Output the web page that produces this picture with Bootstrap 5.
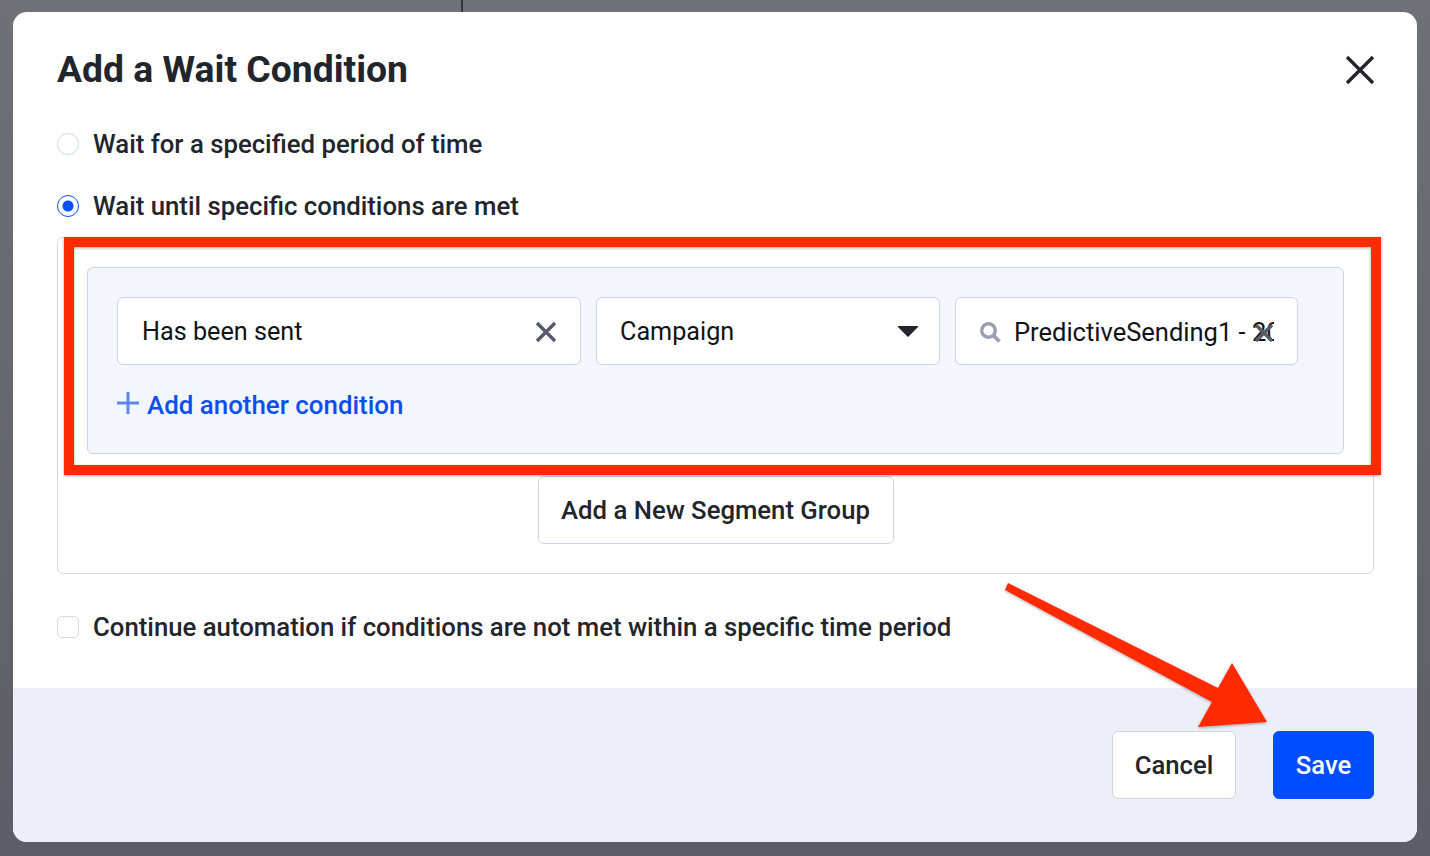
<!DOCTYPE html>
<html lang="en">
<head>
  <meta charset="UTF-8" />
  <meta name="viewport" content="width=device-width, initial-scale=1.0"/>
  <title>Add a Wait Condition</title>
  <link href="https://cdn.jsdelivr.net/npm/bootstrap@5.3.3/dist/css/bootstrap.min.css" rel="stylesheet" />
  <style>
    html, body { height: 100%; }
    body {
      background: linear-gradient(180deg, #6f7176, #5c5d66);
      font-family: "Roboto", "Liberation Sans", sans-serif;
      color: #22252c;
      padding: 12px 13px 14px;
      overflow: hidden;
      position: relative;
    }
    .back-line { position: absolute; left: 461px; top: 0; width: 2px; height: 12px; background: #34363c; }
    .wait-modal {
      height: 830px;
      border: 0;
      border-radius: 14px;
      overflow: hidden;
      position: relative;
    }
    .wait-head { padding: 35px 42px 0 44px; height: 121px; flex: none; }
    .wait-title { font-size: 37.3px; font-weight: 700; line-height: 44px; margin: 0; color: #22252c; }
    .close-x { margin-top: 8px; }
    .wait-body { padding: 0 43px 0 44px; height: 555px; flex: none; }
    .opt-row { height: 22px; font-size: 25.75px; font-weight: 500; line-height: 22px; gap: 14px; }
    .opt-row + .opt-row { margin-top: 40px; }
    .opt-row .form-check-input {
      width: 22px; height: 22px; margin: 0; flex: none;
      border: 1px solid #d5d8e2; box-shadow: none;
    }
    .opt-row .form-check-input[type=checkbox] { border-radius: 5px; }
    .opt-row .form-check-input:checked[type=radio] {
      background-color: #fff;
      border-color: #0a4ff0;
      background-image: radial-gradient(circle, #0a4ff0 0, #0a4ff0 5px, #fff 6px);
    }
    .group-box {
      margin-top: 20px;
      height: 337px;
      border: 1px solid #d5d8e2;
      border-radius: 6px;
      padding: 29px;
    }
    .seg-panel {
      height: 187px;
      background: #f3f6fd;
      border: 1px solid #d0d4e0;
      border-radius: 6px;
      padding: 29px;
    }
    .field-row { gap: 15px; height: 68px; }
    .cond-field {
      height: 68px;
      background: #fff;
      border: 1px solid #d0d4e0;
      border-radius: 6px;
      padding: 2px 23px 0 24px;
      font-size: 25.2px;
      color: #111318;
      line-height: 32px;
    }
    .f-type { width: 464px; }
    .f-kind { width: 344px; padding: 0 20px 0 23px; }
    .f-kind span { padding-top: 2px; }
    .f-pick { width: 343px; position: relative; }
    .pick-text { white-space: nowrap; overflow: hidden; width: 262px; margin-left: 13px; font-size: 25.5px; }
    .pick-x { position: absolute; right: 23px; top: 25px; }
    .add-link {
      margin-top: 25px; gap: 8px; font-size: 25.9px; font-weight: 500; line-height: 30px;
      color: #0a4ff0; text-decoration: none;
    }
    .add-plus { margin-bottom: 4px; }
    .seg-btn {
      display: block;
      margin: 22px auto 0;
      width: 356px; height: 68px;
    }
    .plain-btn {
      background: #fff;
      border: 1px solid #d0d4e0;
      border-radius: 6px;
      font-size: 25.7px;
      font-weight: 500;
      color: #22252c;
      padding: 0;
    }
    .continue-row { margin-top: 42px; }
    .wait-foot {
      background: #eceff7;
      height: 154px;
      border: 0;
      padding: 43px 43px 0 0;
      gap: 37px;
      align-items: flex-start;
      justify-content: flex-end;
      border-radius: 0;
    }
    .foot-cancel { width: 124px; height: 68px; }
    .foot-save {
      width: 101px; height: 68px;
      background: #004cff; border: 1px solid #004cff; border-radius: 6px;
      font-size: 25.7px; font-weight: 500; color: #fff; padding: 0;
    }
    .mark-up { position: absolute; left: 0; top: 0; pointer-events: none; }
  </style>
</head>
<body>
  <div class="back-line"></div>

  <div class="modal-content wait-modal d-flex flex-column bg-white">
    <div class="wait-head d-flex justify-content-between align-items-start">
      <h5 class="wait-title">Add a Wait Condition</h5>
      <svg class="close-x" width="30" height="30" viewBox="0 0 30 30"><path d="M2 2 L28 28 M28 2 L2 28" stroke="#22252c" stroke-width="3.4" fill="none"/></svg>
    </div>

    <div class="wait-body">
      <label class="opt-row d-flex align-items-center">
        <input class="form-check-input" type="radio" name="waitType">
        <span>Wait for a specified period of time</span>
      </label>
      <label class="opt-row d-flex align-items-center">
        <input class="form-check-input" type="radio" name="waitType" checked>
        <span>Wait until specific conditions are met</span>
      </label>

      <div class="group-box">
        <div class="seg-panel">
          <div class="field-row d-flex">
            <div class="cond-field f-type d-flex align-items-center justify-content-between">
              <span>Has been sent</span>
              <svg width="22" height="22" viewBox="0 0 22 22"><path d="M2 2 L20 20 M20 2 L2 20" stroke="#555a68" stroke-width="3.4" fill="none"/></svg>
            </div>
            <div class="cond-field f-kind d-flex align-items-center justify-content-between">
              <span>Campaign</span>
              <svg width="22" height="11" viewBox="0 0 22 11"><path d="M1 0 H21 Q22 0 21 1 L11.6 10.4 Q11 11 10.4 10.4 L1 1 Q0 0 1 0 Z" fill="#22252c"/></svg>
            </div>
            <div class="cond-field f-pick d-flex align-items-center">
              <svg width="21" height="21" viewBox="0 0 21 21" class="flex-shrink-0"><circle cx="8.5" cy="8.5" r="6.8" stroke="#9a9fb0" stroke-width="3.4" fill="none"/><path d="M13.5 13.5 L19.5 19.5" stroke="#9a9fb0" stroke-width="3.8" fill="none"/></svg>
              <div class="pick-text">PredictiveSending1 - 2020</div>
              <svg class="pick-x" width="20" height="20" viewBox="0 0 20 20"><path d="M2 2 L18 18 M18 2 L2 18" stroke="#555a68" stroke-width="3.4" fill="none"/></svg>
            </div>
          </div>
          <a href="#" class="add-link d-inline-flex align-items-center">
            <svg class="add-plus" width="22" height="22" viewBox="0 0 22 22"><path d="M11 0 V22 M0 11 H22" stroke="#5c85f5" stroke-width="3" fill="none"/></svg>
            <span>Add another condition</span>
          </a>
        </div>
        <button type="button" class="btn plain-btn seg-btn">Add a New Segment Group</button>
      </div>

      <label class="opt-row continue-row d-flex align-items-center">
        <input class="form-check-input" type="checkbox">
        <span>Continue automation if conditions are not met within a specific time period</span>
      </label>
    </div>

    <div class="modal-footer wait-foot d-flex">
      <button type="button" class="btn plain-btn foot-cancel m-0">Cancel</button>
      <button type="button" class="btn foot-save m-0">Save</button>
    </div>
  </div>

  <!-- annotation drawn on top of the screenshot -->
  <svg class="mark-up" width="1430" height="856" viewBox="0 0 1430 856">
    <defs>
      <filter id="markShadow" x="-5%" y="-5%" width="110%" height="110%">
        <feDropShadow dx="0" dy="1" stdDeviation="1.5" flood-color="#000" flood-opacity="0.35"/>
      </filter>
    </defs>
    <rect x="69" y="242" width="1307" height="228" fill="none" stroke="#ff2a00" stroke-width="10" filter="url(#markShadow)"/>
    <polygon points="1008,583 1005,590 1212,702 1198,727 1267,722 1232,663 1218,688" fill="#ff2a00" filter="url(#markShadow)"/>
  </svg>

  <script src="https://cdn.jsdelivr.net/npm/bootstrap@5.3.3/dist/js/bootstrap.bundle.min.js"></script>
</body>
</html>
